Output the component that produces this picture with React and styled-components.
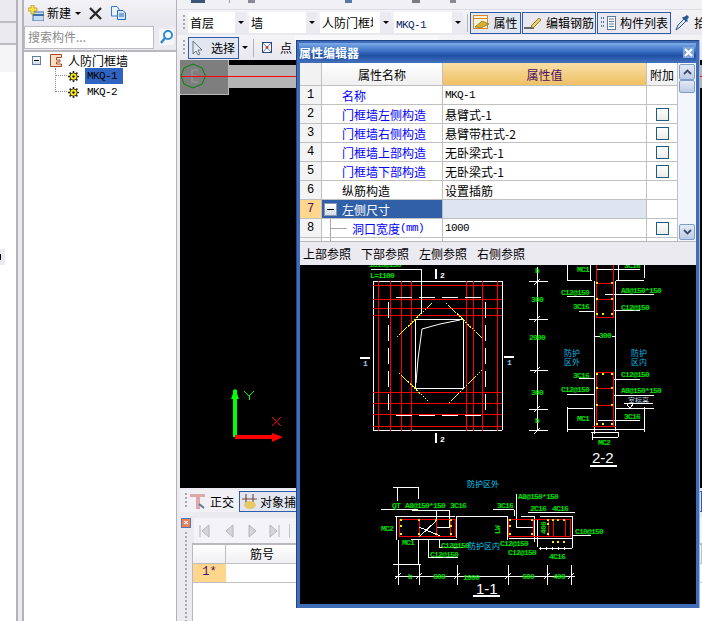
import React from 'react';
import styled, { createGlobalStyle } from 'styled-components';

const GlobalStyle = createGlobalStyle`
  html, body { margin: 0; padding: 0; background: #fff; }
  body { font-family: "Noto Sans CJK SC", "Liberation Sans", sans-serif; font-size: 12px; color: #000; }
`;

const LAV = '#ECEAF1';
const CJK = '"Noto Sans CJK SC", "Liberation Sans", sans-serif';
const MONO = '"Liberation Mono", "Noto Sans CJK SC", monospace';

const Page = styled.div`
  position: relative;
  display: flex;
  width: 702px;
  height: 621px;
  overflow: hidden;
  background: ${LAV};
`;

/* far left, cut off pane */
const LeftPane = styled.div`
  width: 16px;
  display: flex;
  flex-direction: column;
  flex-shrink: 0;
  background: #fff;
`;
const LeftBlock = styled.div`
  height: ${p => p.$h}px;
  flex-shrink: 0;
  background: ${p => p.$bg};
  border-bottom: ${p => (p.$line ? '2px solid #BDBCC4' : 'none')};
`;
const LeftWhite = styled.div`
  flex: 1;
  padding-top: 177px;
`;
const LeftTag = styled.div`
  width: 5px;
  height: 16px;
  background: ${LAV};
  display: flex;
  align-items: center;
  &::before { content: ''; width: 1px; height: 6px; background: #000; }
`;
const Splitter = styled.div`
  width: 4px;
  flex-shrink: 0;
  background: ${LAV};
  border-left: 2px solid #B4B3BA;
  border-right: 2px solid #B4B3BA;
`;

/* component tree */
const TreePanel = styled.div`
  width: 152px;
  flex-shrink: 0;
  display: flex;
  flex-direction: column;
  border-right: 1px solid #B4B3BA;
`;
const TreeBar = styled.div`
  height: 26px;
  flex-shrink: 0;
  display: flex;
  align-items: center;
  padding-left: 4px;
  box-sizing: border-box;
  background: linear-gradient(#F3F2F6, #E8E6EE);
`;
const BarLabel = styled.span`
  margin: 0 4px 0 3px;
  line-height: 16px;
`;
const Caret = styled.span`
  display: block;
  width: 0;
  height: 0;
  flex-shrink: 0;
  margin: ${p => p.$m || '0'};
  border-left: 3px solid transparent;
  border-right: 3px solid transparent;
  border-top: 3px solid #000;
`;
const IconSlot = styled.span`
  display: flex;
  flex-shrink: 0;
  margin: ${p => p.$m || '0'};
`;
const SearchRow = styled.div`
  height: 24px;
  flex-shrink: 0;
  display: flex;
  align-items: flex-start;
  background: ${LAV};
`;
const SearchInput = styled.div`
  width: 125px;
  height: 21px;
  line-height: 20px;
  padding-left: 3px;
  color: #8A8A8A;
  background: #fff;
  border: 1px solid #BDBCC4;
  box-sizing: content-box;
  white-space: nowrap;
`;
const TreeBox = styled.div`
  flex: 1;
  background: #fff;
  border-top: 2px solid #B9B8C0;
  padding-left: 8px;
`;
const RootRow = styled.div`
  height: 16px;
  display: flex;
  align-items: center;
`;
const ExpandBox = styled.span`
  width: ${p => p.$size || 7}px;
  height: ${p => p.$size || 7}px;
  flex-shrink: 0;
  margin-right: ${p => p.$gap || 0}px;
  border: 1px solid ${p => p.$c || '#5E7FA0'};
  background: linear-gradient(#fff, #D4DCE6);
  display: flex;
  align-items: center;
  justify-content: center;
  &::before { content: ''; width: ${p => (p.$size ? 7 : 5)}px; height: 1px; background: #000; }
`;
const RootLabel = styled.span`
  margin-left: 6px;
  white-space: nowrap;
`;
const NodeRow = styled.div`
  height: 16px;
  display: flex;
  align-items: center;
  padding-left: 23px;
`;
const Dots = styled.span`
  width: 12px;
  height: ${p => p.$h}px;
  flex-shrink: 0;
  align-self: flex-start;
  margin-top: ${p => 8 - p.$h}px;
  box-sizing: border-box;
  border-left: 1px dotted #888;
  border-bottom: 1px dotted #888;
`;
const NodeLabel = styled.span`
  margin-left: 6px;
  padding: 0 6px 0 2px;
  height: 16px;
  font: 11px/16px ${MONO};
  letter-spacing: -0.6px;
  background: ${p => (p.$on ? '#2F65C0' : 'transparent')};
`;

/* main area */
const Main = styled.div`
  flex: 1;
  min-width: 0;
  display: flex;
  flex-direction: column;
`;
const TopStrip = styled.div`
  height: 10px;
  flex-shrink: 0;
  display: flex;
  align-items: flex-start;
  padding-left: 14px;
  background: #F1F0F4;
  border-bottom: 1px solid #DDDBE4;
  box-sizing: border-box;
`;
const Stub = styled.span`
  width: ${p => p.$w}px;
  height: 3px;
  flex-shrink: 0;
  margin-right: ${p => p.$gap}px;
  background: ${p => p.$c};
`;
const ComboBar = styled.div`
  height: 25px;
  flex-shrink: 0;
  display: flex;
  align-items: center;
  padding-left: 6px;
  box-sizing: border-box;
  background: linear-gradient(#F4F3F7, #E9E7EF);
`;
const Grip = styled.span`
  width: 2px;
  height: 16px;
  flex-shrink: 0;
  margin-right: 3px;
  background: repeating-linear-gradient(#A9A8B0 0 2px, transparent 2px 4px);
`;
const Combo = styled.div`
  width: ${p => p.$w}px;
  height: 21px;
  flex-shrink: 0;
  margin-right: 3px;
  display: flex;
  align-items: center;
  background: #fff;
  overflow: hidden;
`;
const ComboText = styled.span`
  flex: 1;
  min-width: 0;
  overflow: hidden;
  margin-right: 7px;
  padding-left: 2px;
  white-space: nowrap;
  color: ${p => p.$c || '#000'};
`;
const ComboArrow = styled.span`
  width: 11px;
  height: 21px;
  flex-shrink: 0;
  display: flex;
  align-items: center;
  justify-content: center;
  background: ${LAV};
`;
const VSep = styled.span`
  width: 1px;
  height: 18px;
  flex-shrink: 0;
  margin: ${p => p.$m};
  background: #B4B3BA;
`;
const ToolButton = styled.div`
  width: ${p => p.$w}px;
  height: 22px;
  flex-shrink: 0;
  margin-right: 1px;
  box-sizing: border-box;
  display: flex;
  align-items: center;
  justify-content: center;
  gap: 3px;
  border: 1px solid #2F5CA8;
  background: ${p => (p.$on ? '#E2E6F0' : '#E9E8EF')};
  white-space: nowrap;
`;
const ToolBar = styled.div`
  height: 25px;
  flex-shrink: 0;
  display: flex;
  align-items: center;
  padding-left: 6px;
  box-sizing: border-box;
  background: linear-gradient(#F4F3F7, #E9E7EF);
`;
const ToolFill = styled.span`
  width: 144px;
  height: 25px;
  flex-shrink: 0;
  margin-left: 3px;
  background: #F8F7FA;
`;
const CadWrap = styled.div`
  flex: 1;
  min-height: 0;
  display: flex;
  padding-left: 3px;
`;
const Cad = styled.svg`
  display: block;
  flex: 1;
  height: 428px;
  background: #000;
`;

/* lower panel */
const BottomPanel = styled.div`
  height: 133px;
  flex-shrink: 0;
  display: flex;
  flex-direction: column;
  padding-left: 3px;
  box-sizing: border-box;
`;
const ModeBar = styled.div`
  height: 22px;
  flex-shrink: 0;
  margin-top: 2px;
  display: flex;
  align-items: center;
  padding-left: 5px;
  box-sizing: border-box;
  background: #F1F0F4;
  white-space: nowrap;
  overflow: hidden;
`;
const ModeLabel = styled.span`
  margin: 0 5px 0 4px;
`;
const ModeButton = styled.div`
  flex: 1;
  height: 21px;
  display: flex;
  align-items: center;
  box-sizing: border-box;
  border: 1px solid #2F5CA8;
  background: #E2E6F0;
  padding-left: 2px;
  overflow: hidden;
`;
const GridPanel = styled.div`
  flex: 1;
  min-height: 0;
  display: flex;
  padding-top: 6px;
`;
const Rail = styled.div`
  width: 12px;
  flex-shrink: 0;
  display: flex;
  flex-direction: column;
  align-items: flex-start;
`;
const CloseTag = styled.span`
  width: 10px;
  height: 10px;
  margin-left: 1px;
  background: #E8825E;
  border: 1px solid #5577AA;
  box-sizing: border-box;
  color: #fff;
  font: bold 8px/8px "Liberation Sans", sans-serif;
  text-align: center;
`;
const RailGrip = styled.span`
  width: 2px;
  flex: 1;
  margin: 4px 0 0 5px;
  background: repeating-linear-gradient(#A9A8B0 0 2px, transparent 2px 4px);
`;
const GridCol = styled.div`
  flex: 1;
  min-width: 0;
  display: flex;
  flex-direction: column;
`;
const NavBar = styled.div`
  height: 25px;
  flex-shrink: 0;
  margin-left: 2px;
  display: flex;
  align-items: center;
  padding-left: 5px;
  box-sizing: border-box;
  background: #F4F3F7;
`;
const BottomGrid = styled.div`
  flex: 1;
  background: #fff;
  border-top: 2px solid #B9B8C0;
  border-left: 1px solid #B9B8C0;
`;
const BottomRow = styled.div`
  display: grid;
  grid-template-columns: 33px 1fr;
  height: 18px;
  border-bottom: 1px solid #C0C0C0;
`;
const BottomHead = styled.div`
  border-right: 1px solid #C0C0C0;
  padding-left: ${p => p.$pad || 0}px;
  background: linear-gradient(#fff, #EFEFF2);
  line-height: 17px;
`;
const SelNum = styled.div`
  background: #FFD68C;
  color: #4B0F6A;
  font: 12px/17px ${MONO};
  text-align: center;
`;

/* property editor window */
const Dialog = styled.div`
  position: absolute;
  left: 296px;
  top: 40px;
  width: 404px;
  height: 568px;
  box-sizing: border-box;
  display: flex;
  flex-direction: column;
  padding: 3px 4px 4px;
  background: #3F6DB8;
  box-shadow: inset 1px 0 #1F4488, inset -1px 0 #9DB7E0, inset 0 1px #1F4488;
`;
const TitleBar = styled.div`
  height: 18px;
  flex-shrink: 0;
  margin-bottom: 2px;
  display: flex;
  align-items: center;
  justify-content: space-between;
  padding: 0 2px 0 0;
  margin-left: -1px;
  background: linear-gradient(#7EACE8, #3B70C4 45%, #1F50A4 70%, #3A68B8);
  color: #fff;
  font-weight: bold;
`;
const CloseX = styled.span`
  width: 11px;
  height: 11px;
  display: flex;
  align-items: center;
  justify-content: center;
  background: #7FA6DC;
`;
const PropsArea = styled.div`
  height: 178px;
  flex-shrink: 0;
  display: flex;
  background: #fff;
  overflow: hidden;
`;
const PropsTable = styled.div`
  width: 378px;
  flex-shrink: 0;
`;
const PropRow = styled.div`
  display: grid;
  grid-template-columns: 22px 121px 204px 31px;
  height: ${p => p.$h || 19}px;
  box-sizing: border-box;
  border-bottom: 1px solid #C0C0C0;
`;
const Cell = styled.div`
  position: relative;
  display: flex;
  align-items: center;
  justify-content: ${p => (p.$center ? 'center' : 'flex-start')};
  padding-left: ${p => p.$pad || 0}px;
  box-sizing: border-box;
  border-right: 1px solid #C0C0C0;
  white-space: nowrap;
  overflow: hidden;
  color: ${p => p.$c || '#000'};
  background: ${p => p.$bg || '#fff'};
`;
const MonoText = styled.span`
  font: 11px ${MONO};
  letter-spacing: -0.6px;
`;
const HeadMono = styled.span`
  font: 12px ${MONO};
`;
const Check = styled.span`
  width: 11px;
  height: 11px;
  border: 1px solid #1F5C85;
  background: linear-gradient(#fff, #ECEBE5);
`;
const TreeGlyph = styled.span`
  width: 16px;
  height: 1px;
  flex-shrink: 0;
  margin-right: 5px;
  background: #A8A8A8;
`;
const TreeDrop = styled.span`
  position: absolute;
  left: 8px;
  top: 0;
  width: 1px;
  height: 100%;
  background: #A8A8A8;
`;
const ScrollBar = styled.div`
  width: 18px;
  flex-shrink: 0;
  display: flex;
  flex-direction: column;
  padding: 1px;
  box-sizing: border-box;
  background: #F3F6FB;
`;
const ScrollBtn = styled.span`
  width: 16px;
  height: ${p => p.$h}px;
  flex-shrink: 0;
  box-sizing: border-box;
  display: flex;
  align-items: center;
  justify-content: center;
  border: 1px solid #7E9CC8;
  border-radius: 2px;
  background: linear-gradient(#E2EAF6, #BCCCE6);
`;
const ScrollGap = styled.span`
  flex: 1;
`;
const RefTabs = styled.div`
  height: 24px;
  flex-shrink: 0;
  display: flex;
  align-items: center;
  gap: 10px;
  padding-left: 3px;
  background: ${LAV};
  border-top: 1px solid #B9B8C0;
  box-sizing: border-box;
`;
const Drawing = styled.svg`
  display: block;
  flex: 1;
  width: 396px;
  min-height: 0;
  background: #000;
`;

const rows = [
  { n: 1, name: '名称', val: 'MKQ-1', blue: true, mono: true },
  { n: 2, name: '门框墙左侧构造', val: '悬臂式-1', blue: true, check: true },
  { n: 3, name: '门框墙右侧构造', val: '悬臂带柱式-2', blue: true, check: true },
  { n: 4, name: '门框墙上部构造', val: '无卧梁式-1', blue: true, check: true },
  { n: 5, name: '门框墙下部构造', val: '无卧梁式-1', blue: true, check: true },
  { n: 6, name: '纵筋构造', val: '设置插筋' },
];

const Seg = ({ d, c = '#fff', w = 1, dash }) => (
  <path d={d} stroke={c} strokeWidth={w} strokeDasharray={dash} fill="none" shapeRendering="crispEdges" />
);

// cad labels are tall and narrow: 4px a character
const Label = ({ x, y, t, c = '#00E000', size = 8, anchor = 'start', font = MONO, rot, bold = true }) => (
  <text x={x} y={y} fill={c} fontSize={size} fontFamily={font} fontWeight={bold ? 700 : 400} textAnchor={anchor}
    letterSpacing={font === MONO ? -0.8 : 0}
    transform={rot ? `rotate(${rot} ${x} ${y})` : undefined}>{t}</text>
);

const Dots4 = ({ pts }) => pts.map(([x, y]) => <rect key={x + '-' + y} x={x - 1} y={y - 1} width="2" height="2" fill="#FFF000" />);

// short dimension ticks
const ticks = pts => pts.map(([x, y]) => `M${x - 3} ${y + 3}L${x + 3} ${y - 3}`).join('');

const PlanView = () => (
  <g>
    <Seg d="M373 282.5H502M373 431.5H502M373.5 282V431M502.5 282V431" />
    <Seg d="M378.5 282V432M390.5 282V432M401.5 282V432M411.5 282V432M466.5 282V432M473.5 282V432M482.5 282V432M497.5 282V432" c="#FF0000" />
    <Seg d="M373 286.5H502M373 300.5H502M373 309.5H502M373 316.5H502M373 393.5H502M373 404.5H502M373 415.5H502M373 427.5H502" c="#FF0000" />
    <Seg d="M396 298.5H486M396 416.5H486M388.5 303V416M485.5 303V416" dash="16 7" />
    <Seg d="M415.5 320.5H463.5V389.5H415.5Z" />
    <path d="M416 384L418 360L422 330L440 325L460 321" stroke="#fff" strokeWidth="1" fill="none" />
    <Seg d="M397 338L432 304M446 304L483 340M399 374L429 403M449 404L482 371" c="#FFFF00" dash="2 1" />
    <Seg d="M371 270.5H421.5V315" />
    <Seg d="M436 270V280M436 434V444" w={2} />
    <Seg d="M360 359H370M504 358H514" w={2} />
    <Label x={440} y={279} t="2" c="#fff" />
    <Label x={440} y={443} t="2" c="#fff" />
    <Label x={363} y={367} t="1" c="#9CC8F0" />
    <Label x={507} y={366} t="1" c="#9CC8F0" />
    <Label x={370} y={279} t="L=1100" />
    <Label x={369} y={268} t="1C16@150" />
  </g>
);

const SectionTwo = () => (
  <g>
    <Seg d="M537.5 268V432M529 282.5H548M529 320.5H548M530 371.5H548M529 410.5H548M529 431.5H548" />
    <Seg d={ticks([[537, 283], [537, 320], [537, 371], [537, 410], [537, 432]])} />
    <Label x={537} y={274} t="b" anchor="middle" />
    <Label x={537} y={303} t="300" anchor="middle" />
    <Label x={537} y={341} t="2000" anchor="middle" />
    <Label x={537} y={396} t="300" anchor="middle" />
    <Label x={537} y={424} t="b" anchor="middle" />
    <Seg d="M567.5 266V281M567 281.5H592M644.5 266V279M615.5 281.5H644M590.5 266V281M618.5 266V281M597 270.5H640" />
    <Seg d="M594.5 282V435M615.5 282V432M567 297.5H594M605 295.5H654M579 312.5H594M613 311.5H640M579 379.5H594M613 380.5H640M567 395.5H594M613 396.5H654M594 337.5H600M612 337.5H616" />
    <Seg d="M567.5 408V433M567 409.5H593M567 430.5H644M644.5 408V433M615 409.5H654M598 421.5H640M591 433.5H618.5V438M592 438.5H618M592.5 434V441" />
    <Seg d="M596.5 266V319M613.5 266V319M596 284.5H614M596 300.5H614M596 318.5H614M596.5 373V428M613.5 373V428M596 373.5H614M596 389.5H614M596 406.5H614" c="#FF0000" />
    <Seg d="M593 427.5H616" c="#FF0000" w={1.5} />
    <Dots4 pts={[[597, 284], [612, 284], [597, 300], [612, 300], [597, 315], [603, 315], [612, 315], [597, 375], [603, 375], [612, 375], [597, 389], [612, 389], [597, 406], [612, 406], [597, 425], [603, 425], [612, 425]]} />
    <Label x={577} y={273} t="MC1" />
    <Label x={624} y={269} t="3C16" />
    <Label x={561} y={296} t="C12@150" />
    <Label x={621} y={294} t="A8@150*150" />
    <Label x={573} y={310} t="3C16" />
    <Label x={621} y={311} t="C12@150" />
    <Label x={599} y={339} t="300" />
    <Label x={573} y={379} t="3C16" />
    <Label x={621} y={378} t="C12@150" />
    <Label x={561} y={393} t="C12@150" />
    <Label x={621} y={394} t="A8@150*150" />
    <Label x={628} y={404} t="室标高" c="#C8D8E8" size={7} font={CJK} bold={false} />
    <Seg d="M624 404.5H653M627 405L630 410L633 405" />
    <Label x={624} y={420} t="3C16" />
    <Label x={577} y={422} t="MC1" />
    <Label x={598} y={446} t="MC2" />
    <Label x={564} y={357} t="防护" c="#10B8E0" size={8} font={CJK} bold={false} />
    <Label x={564} y={366} t="区外" c="#10B8E0" size={8} font={CJK} bold={false} />
    <Label x={631} y={357} t="防护" c="#10B8E0" size={8} font={CJK} bold={false} />
    <Label x={631} y={366} t="区内" c="#10B8E0" size={8} font={CJK} bold={false} />
    <Label x={592} y={464} t="2-2" c="#fff" size={15} font={'"Liberation Sans", sans-serif'} bold={false} />
    <Seg d="M590 466.5H617" w={2} />
  </g>
);

const SectionOne = () => (
  <g>
    <Seg d="M393 488.5H418M397.5 488V502M418.5 488V500M381 510.5H418M395 517.5H455M396.5 518V541M456.5 517V539M456 517.5H507M411 540.5H457M412 511H449V528H436M436.5 511V528" />
    <Seg d="M393 565.5H421M398.5 541V565M418.5 541V565M428 540.5H440M428.5 540V558H458M439.5 540V548H463" />
    <Seg d="M493 510.5H514M514.5 511V517M516 495V528H534M507.5 517V541M509 539H572M572.5 517V549M540 517.5H572M528 513.5H575M539 549.5H572M521 517H534V543M537 548V520M591 536.5H572M540 548V551M546 548V551M552 548V551M558 548V551M564 548V551" />
    <Seg d="M399.5 520V538M419.5 520V538M436.5 520V538M450.5 520V538M455.5 520V538M399 520.5H456M399 537.5H456M508.5 520V538M533.5 520V538M548.5 520V538M553.5 520V538M565.5 520V538M570.5 520V538M508 520.5H570M508 537.5H570" c="#FF0000" />
    <Seg d="M419 528L440 537M436 522L419 538" />
    <Dots4 pts={[[401, 521], [401, 527], [401, 535], [419, 521], [419, 535], [436, 521], [436, 535], [451, 521], [451, 527], [451, 535], [510, 521], [510, 527], [510, 535], [532, 521], [532, 535], [548, 521], [548, 525], [548, 535], [553, 521], [558, 521], [564, 521], [553, 543], [558, 543], [564, 543]]} />
    <Seg d="M395 577.5H575M398.5 566V586M419.5 566V586M457.5 566V586M508.5 566V586M547.5 566V586M571.5 566V586" />
    <Seg d={ticks([[398, 577], [419, 577], [457, 577], [508, 577], [547, 577], [571, 577]])} />
    <Label x={392} y={509} t="QT" />
    <Label x={405} y={509} t="A8@150*150" />
    <Label x={450} y={509} t="3C16" />
    <Label x={497} y={509} t="3C16" />
    <Label x={518} y={500} t="A8@150*150" />
    <Label x={530} y={512} t="2C16" />
    <Label x={552} y={512} t="4C16" />
    <Label x={381} y={532} t="MC2" />
    <Label x={402} y={546} t="MC1" />
    <Label x={441} y={549} t="C12@150" />
    <Label x={500} y={547} t="C12@150" />
    <Label x={508} y={556} t="C12@150" />
    <Label x={430} y={558} t="C12@150" />
    <Label x={549} y={560} t="4C16" />
    <Label x={575} y={535} t="C10@150" />
    <Label x={500} y={535} t="LW" rot={-90} />
    <Label x={546} y={535} t="400" rot={-90} />
    <Label x={467} y={488} t="防护区外" c="#10C8F0" size={8} font={CJK} bold={false} />
    <Label x={468} y={550} t="防护区内" c="#10C8F0" size={8} font={CJK} bold={false} />
    <Label x={408} y={580} t="b" />
    <Label x={433} y={580} t="600" />
    <Label x={463} y={581} t="1000" />
    <Label x={522} y={580} t="600" />
    <Label x={553} y={580} t="400" />
    <Label x={476} y={595} t="1-1" c="#fff" size={15} font={'"Liberation Sans", sans-serif'} bold={false} />
    <Seg d="M473 596.5H500" w={2} />
  </g>
);

const App = () => {
  return (
    <>
      <GlobalStyle />
      <Page>
        <LeftPane>
          <LeftBlock $h={21} $bg={LAV} $line />
          <LeftBlock $h={20} $bg={LAV} $line />
          <LeftBlock $h={27} $bg="#F5F5F8" />
          <LeftWhite>
            <LeftTag />
          </LeftWhite>
        </LeftPane>
        <Splitter />

        <TreePanel>
          <TreeBar>
            <IconSlot>
              <svg width="16" height="16" viewBox="0 0 16 16">
                <rect x="5" y="7" width="11" height="9" fill="#C8DCF0" stroke="#3A6EA5" />
                <path d="M5 10H16" stroke="#3A6EA5" strokeWidth="2" />
                <path d="M3 0H6V3H9V6H6V9H3V6H0V3H3Z" fill="#FFE24A" stroke="#A89020" strokeWidth=".7" />
              </svg>
            </IconSlot>
            <BarLabel>新建</BarLabel>
            <Caret $m="0 8px 0 0" />
            <IconSlot $m="0 9px 0 0">
              <svg width="13" height="13" viewBox="0 0 13 13"><path d="M1 1L12 12M12 1L1 12" stroke="#2A2A2A" strokeWidth="2.4" /></svg>
            </IconSlot>
            <IconSlot>
              <svg width="15" height="14" viewBox="0 0 15 14">
                <path d="M.5.5H6L8 3V10H.5Z" fill="#EAF2FB" stroke="#3A78C0" />
                <path d="M6.5 4.5H12L14.5 7V13.5H6.5Z" fill="#D4E6F8" stroke="#2A68B0" />
                <path d="M8 8H13M8 10H13" stroke="#2A68B0" />
              </svg>
            </IconSlot>
          </TreeBar>
          <SearchRow>
            <SearchInput>搜索构件...</SearchInput>
            <IconSlot $m="3px 0 0 5px">
              <svg width="15" height="16" viewBox="0 0 15 16">
                <rect width="15" height="16" fill="#F6F5F8" />
                <circle cx="9" cy="6" r="4" fill="#fff" stroke="#2F8CCF" strokeWidth="2" />
                <path d="M6 9L2 14" stroke="#2F8CCF" strokeWidth="2.5" />
              </svg>
            </IconSlot>
          </SearchRow>
          <TreeBox>
            <RootRow>
              <ExpandBox />
              <IconSlot $m="0 0 0 9px">
                <svg width="12" height="13" viewBox="0 0 12 13">
                  <path d="M.5.5H11.5V3.5H6.5V6H10V8H6.5V10H11.5V12.5H.5Z" fill="#F8E0C8" stroke="#A8481C" />
                </svg>
              </IconSlot>
              <RootLabel>人防门框墙</RootLabel>
            </RootRow>
            {['MKQ-1', 'MKQ-2'].map((m, i) => (
              <NodeRow key={m}>
                <Dots $h={i === 0 ? 8 : 24} />
                <IconSlot $m="0 0 0 1px">
                  <svg width="11" height="11" viewBox="0 0 11 11">
                    <path d="M5.5 0V11M0 5.5H11M1.6 1.6L9.4 9.4M9.4 1.6L1.6 9.4" stroke="#222" strokeWidth="1.6" />
                    <circle cx="5.5" cy="5.5" r="3.6" fill="#FFF000" stroke="#222" strokeWidth=".8" />
                    <circle cx="5.5" cy="5.5" r="1.2" fill="#222" />
                  </svg>
                </IconSlot>
                <NodeLabel $on={i === 0}>{m}</NodeLabel>
              </NodeRow>
            ))}
          </TreeBox>
        </TreePanel>

        <Main>
          <TopStrip>
            <Stub $w={14} $gap={24} $c="#3A5578" />
            <Stub $w={1} $gap={18} $c="#9A9AA4" />
            <Stub $w={7} $gap={90} $c="#8A8A94" />
            <Stub $w={7} $gap={60} $c="#5577AA" />
            <Stub $w={8} $gap={30} $c="#7A7A84" />
            <Stub $w={6} $gap={70} $c="#8A8A94" />
          </TopStrip>
          <ComboBar>
            <Grip />
            <Combo $w={58}>
              <ComboText>首层</ComboText>
              <ComboArrow><Caret /></ComboArrow>
            </Combo>
            <Combo $w={68}>
              <ComboText>墙</ComboText>
              <ComboArrow><Caret /></ComboArrow>
            </Combo>
            <Combo $w={71}>
              <ComboText>人防门框墙</ComboText>
              <ComboArrow><Caret /></ComboArrow>
            </Combo>
            <Combo $w={69}>
              <ComboText $c="#0A246A"><MonoText>MKQ-1</MonoText></ComboText>
              <ComboArrow><Caret /></ComboArrow>
            </Combo>
            <VSep $m="0 2px 0 1px" />
            <ToolButton $w={51} $on>
              <svg width="17" height="15" viewBox="0 0 17 15">
                <rect x=".5" y=".5" width="14" height="13" fill="#FDF3D8" stroke="#D8862C" />
                <path d="M.5 3.5H14.5" stroke="#D8862C" />
                <path d="M2 12L9 6L16 9L8 13Z" fill="#D8B030" stroke="#7A6A20" strokeWidth=".7" />
              </svg>
              属性
            </ToolButton>
            <ToolButton $w={74}>
              <svg width="19" height="14" viewBox="0 0 19 14">
                <path d="M0 12H10" stroke="#333" strokeWidth="1.4" />
                <path d="M7 10L15 2L17 4L9 12Z" fill="#F0D060" stroke="#7A5A20" strokeWidth=".8" />
              </svg>
              编辑钢筋
            </ToolButton>
            <ToolButton $w={74}>
              <svg width="17" height="14" viewBox="0 0 17 14">
                <path d="M1 2H4M1 6H4M1 10H4" stroke="#4A7AA8" strokeWidth="2" strokeDasharray="1 1" />
                <rect x="7.5" y=".5" width="8" height="13" fill="#fff" stroke="#5A7A98" />
                <path d="M9 3H14M9 5.5H14M9 8H14M9 10.5H14" stroke="#5A7A98" />
              </svg>
              构件列表
            </ToolButton>
            <IconSlot $m="0 4px 0 3px">
              <svg width="15" height="17" viewBox="0 0 15 17">
                <path d="M1 16L3 11L9 5L11 7L5 13Z" fill="#DDEBF7" stroke="#2A5A90" />
                <path d="M9 3L12 1L14 3L12 6L13 7L12 8L7 4L8 3Z" fill="#2A5A90" />
              </svg>
            </IconSlot>
            拾
          </ComboBar>
          <ToolBar>
            <Grip />
            <ToolButton $w={51} $on>
              <svg width="11" height="16" viewBox="0 0 11 16" style={{ marginRight: 5 }}>
                <path d="M1 1V14L4 11L6 15L8 14L6 10H10Z" fill="#E4E8F2" stroke="#6A7488" />
              </svg>
              选择
            </ToolButton>
            <Caret $m="0 5px 0 2px" />
            <VSep $m="0 8px 0 0" />
            <IconSlot $m="0 8px 0 0">
              <svg width="10" height="11" viewBox="0 0 10 11">
                <rect x=".5" y=".5" width="9" height="10" fill="#fff" stroke="#2A4A88" />
                <path d="M1 1L9 10M9 1L1 10" stroke="#6A7AA8" />
                <circle cx="5" cy="5.5" r="1.3" fill="#E02020" />
              </svg>
            </IconSlot>
            点
            <ToolFill />
          </ToolBar>
          <CadWrap>
            <Cad viewBox="180 60 522 428" preserveAspectRatio="xMinYMin">
              <rect x="180" y="60" width="49" height="35" fill="#7E7E7E" />
              <rect x="228" y="65" width="474" height="23" fill="#B4B4B4" />
              <Seg d="M228.5 60V95M180 94.5H229" c="#B8B8B8" />
              <path d="M198 70H192V82H198M192 76H197" stroke="#8E8E8E" strokeWidth="2" fill="none" />
              <path d="M181 76L184 68L193 64L202 68L205.5 76L202 84L193 88L184 84Z" fill="none" stroke="#008800" />
              <Seg d="M181 76.5H702" c="#FF0000" />
              <rect x="233" y="390" width="4" height="47" fill="#00FF00" />
              <path d="M235 388L231 399H239Z" fill="#00FF00" />
              <rect x="235" y="435" width="40" height="4" fill="#FF0000" />
              <path d="M283 437L272 433V442Z" fill="#FF0000" />
              <Seg d="M244 391L249 396L254 391M249 396V400" c="#00FF00" />
              <Seg d="M272 417L281 426M281 417L272 426" c="#FF0000" />
            </Cad>
          </CadWrap>
          <BottomPanel>
            <ModeBar>
              <Grip />
              <IconSlot>
                <svg width="16" height="16" viewBox="0 0 16 16">
                  <path d="M0 1H15V4H10V16H6V4H0Z" fill="#DCA8A8" />
                  <path d="M9 11L14 15" stroke="#5A7A98" strokeWidth="2" />
                </svg>
              </IconSlot>
              <ModeLabel>正交</ModeLabel>
              <ModeButton>
                <IconSlot $m="0 3px 0 0">
                  <svg width="15" height="17" viewBox="0 0 15 17">
                    <path d="M4 1V12M11 1V12M0 6H15" stroke="#7A4A4A" strokeWidth="1.2" />
                    <ellipse cx="8" cy="12" rx="6" ry="4" fill="#E8C868" />
                  </svg>
                </IconSlot>
                对象捕
              </ModeButton>
            </ModeBar>
            <GridPanel>
              <Rail>
                <CloseTag>×</CloseTag>
                <RailGrip />
              </Rail>
              <GridCol>
                <NavBar>
                  <svg width="92" height="14" viewBox="0 0 92 14">
                    <path d="M1 1V13M10 1V13L3 7Z" fill="#D4D4DA" stroke="#B4B4BC" />
                    <path d="M34 1V13L27 7Z" fill="#D4D4DA" stroke="#B4B4BC" />
                    <path d="M50 1V13L57 7Z" fill="#D4D4DA" stroke="#B4B4BC" />
                    <path d="M71 1V13L78 7ZM80 1V13" fill="#D4D4DA" stroke="#B4B4BC" />
                    <path d="M90.5 0V14" stroke="#C4C4CC" />
                  </svg>
                </NavBar>
                <BottomGrid>
                  <BottomRow>
                    <BottomHead />
                    <BottomHead $pad={24}>筋号</BottomHead>
                  </BottomRow>
                  <BottomRow>
                    <SelNum>1*</SelNum>
                    <div />
                  </BottomRow>
                </BottomGrid>
              </GridCol>
            </GridPanel>
          </BottomPanel>
        </Main>

        <Dialog>
          <TitleBar>
            属性编辑器
            <CloseX>
              <svg width="9" height="9" viewBox="0 0 9 9"><path d="M1 1L8 8M8 1L1 8" stroke="#fff" strokeWidth="2" /></svg>
            </CloseX>
          </TitleBar>
          <PropsArea>
            <PropsTable>
              <PropRow $h={23}>
                <Cell $bg="#F2F2F2" />
                <Cell $center $bg="linear-gradient(#fff, #F0F0F0)">属性名称</Cell>
                <Cell $center $c="#4B0F6A" $bg="linear-gradient(#F9DFA6, #EFC064)">属性值</Cell>
                <Cell $center $bg="linear-gradient(#fff, #F0F0F0)">附加</Cell>
              </PropRow>
              {rows.map(r => (
                <PropRow key={r.n}>
                  <Cell $center $bg="#F4F4F4"><HeadMono>{r.n}</HeadMono></Cell>
                  <Cell $pad={20} $c={r.blue ? '#0000FF' : '#000'}>{r.name}</Cell>
                  <Cell $pad={2}>{r.mono ? <MonoText>{r.val}</MonoText> : r.val}</Cell>
                  <Cell $center>{r.check && <Check />}</Cell>
                </PropRow>
              ))}
              <PropRow>
                <Cell $center $bg="#FFD68C" $c="#4B0F6A"><HeadMono>7</HeadMono></Cell>
                <Cell $pad={2} $bg="#315FA8" $c="#fff">
                  <ExpandBox $size={11} $gap={5} $c="#8A9AB0" />
                  左侧尺寸
                </Cell>
                <Cell $bg="#DFE5F0" />
                <Cell />
              </PropRow>
              <PropRow>
                <Cell $center $bg="#F4F4F4"><HeadMono>8</HeadMono></Cell>
                <Cell $pad={9} $c="#0000FF">
                  <TreeDrop />
                  <TreeGlyph />
                  洞口宽度<MonoText>(mm)</MonoText>
                </Cell>
                <Cell $pad={2}><MonoText>1000</MonoText></Cell>
                <Cell $center><Check /></Cell>
              </PropRow>
              <PropRow>
                <Cell $bg="#F4F4F4" />
                <Cell><TreeDrop /></Cell>
                <Cell />
                <Cell />
              </PropRow>
            </PropsTable>
            <ScrollBar>
              <ScrollBtn $h={16}>
                <svg width="9" height="6" viewBox="0 0 9 6"><path d="M1 5L4.5 1.5L8 5" stroke="#3A4A68" strokeWidth="1.8" fill="none" /></svg>
              </ScrollBtn>
              <ScrollBtn $h={13} />
              <ScrollGap />
              <ScrollBtn $h={16}>
                <svg width="9" height="6" viewBox="0 0 9 6"><path d="M1 1L4.5 4.5L8 1" stroke="#3A4A68" strokeWidth="1.8" fill="none" /></svg>
              </ScrollBtn>
            </ScrollBar>
          </PropsArea>
          <RefTabs>
            <span>上部参照</span>
            <span>下部参照</span>
            <span>左侧参照</span>
            <span>右侧参照</span>
          </RefTabs>
          <Drawing viewBox="300 266 396 338" preserveAspectRatio="xMinYMin">
            <PlanView />
            <SectionTwo />
            <SectionOne />
          </Drawing>
        </Dialog>
      </Page>
    </>
  );
};

export default App;
